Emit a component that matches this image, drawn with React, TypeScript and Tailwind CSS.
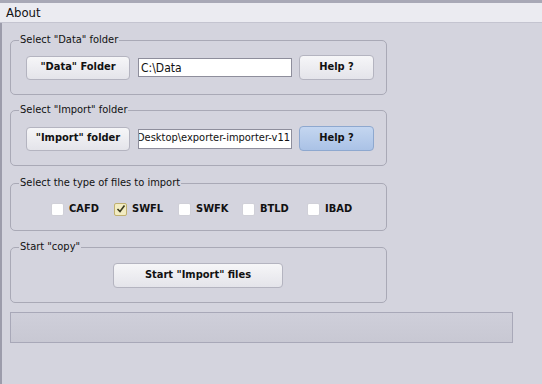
import React from "react";

const font = { fontFamily: '"DejaVu Sans", "Liberation Sans", sans-serif' };

function Btn({ children, w, blue }: { children: React.ReactNode; w: string; blue?: boolean }) {
  return (
    <div
      className={
        "flex h-[24px] items-center justify-center rounded-[4px] border text-[11px] font-bold font-stretch-condensed text-[#111] " +
        w +
        (blue
          ? " border-[#8ea8cf] bg-gradient-to-b from-[#c4d6f0] to-[#aac2e6]"
          : " border-[#b4b4c0] bg-gradient-to-b from-[#f6f6f8] to-[#e4e4ea]")
      }
    >
      {children}
    </div>
  );
}

function Group({ title, className, children }: { title: string; className: string; children: React.ReactNode }) {
  return (
    <div className={"relative w-[377px] rounded-[5px] border border-[#a9a9b6] " + className}>
      <span className="absolute left-[8px] top-[-9px] bg-[#d4d4de] px-[1px] text-[11px] leading-[16px] font-stretch-condensed text-[#111]">
        {title}
      </span>
      {children}
    </div>
  );
}

function Check({ label, checked }: { label: string; checked?: boolean }) {
  return (
    <div className="flex items-center gap-[5px]">
      <div
        className={
          "flex h-[13px] w-[13px] items-center justify-center rounded-[2px] border " +
          (checked ? "border-[#c0b070] bg-[#f2ecc2]" : "border-[#d0d0d8] bg-white")
        }
      >
        {checked && (
          <svg width="10" height="10" viewBox="0 0 10 10">
            <polyline points="1.5,5 4,7.5 8.5,1.5" fill="none" stroke="#3a3a20" strokeWidth="1.6" />
          </svg>
        )}
      </div>
      <span className="text-[11px] font-bold font-stretch-condensed text-[#111]">{label}</span>
    </div>
  );
}

export default function App() {
  return (
    <div style={font} className="flex h-[384px] w-[542px] flex-col overflow-hidden bg-[#d4d4de]">
      <div className="h-[3px] bg-[#a8a8b6]" />
      <div className="flex h-[20px] items-center border-b border-[#c4c4d0] bg-[#ebebf1] pl-[6px] text-[13px] font-stretch-condensed text-[#111]">
        About
      </div>
      <div className="flex flex-1 flex-col border-l-2 border-[#9c9cab] pl-[8px]">
        <Group title={'Select "Data" folder'} className="mt-[17px] h-[55px]">
          <div className="flex items-center pl-[15px] pt-[14px]">
            <Btn w="w-[104px]">"Data" Folder</Btn>
            <div className="ml-[8px] flex h-[19px] w-[154px] items-center overflow-hidden border border-[#8e8e9c] bg-white pl-[2px] text-[12px] font-stretch-condensed text-[#111]">
              C:\Data
            </div>
            <div className="ml-[7px]">
              <Btn w="w-[75px] h-[25px]">Help ?</Btn>
            </div>
          </div>
        </Group>
        <Group title={'Select "Import" folder'} className="mt-[15px] h-[56px]">
          <div className="flex items-center pl-[15px] pt-[15px]">
            <Btn w="w-[104px]">"Import" folder</Btn>
            <div className="ml-[8px] flex h-[20px] w-[154px] items-center justify-end overflow-hidden whitespace-nowrap border border-[#8e8e9c] bg-white pr-[1px] text-[11px] font-stretch-condensed text-[#111]">
              Desktop\exporter-importer-v11
            </div>
            <div className="ml-[7px]">
              <Btn w="w-[75px] h-[25px]" blue>
                Help ?
              </Btn>
            </div>
          </div>
        </Group>
        <Group title="Select the type of files to import" className="mt-[17px] h-[48px]">
          <div className="grid grid-cols-[63px_64px_64px_65px_auto] pl-[40px] pt-[17px]">
            <Check label="CAFD" />
            <Check label="SWFL" checked />
            <Check label="SWFK" />
            <Check label="BTLD" />
            <Check label="IBAD" />
          </div>
        </Group>
        <Group title={'Start "copy"'} className="mt-[16px] h-[56px]">
          <div className="flex pl-[102px] pt-[15px]">
            <Btn w="w-[170px] h-[25px]">Start "Import" files</Btn>
          </div>
        </Group>
        <div className="mt-[9px] h-[31px] w-[503px] border border-[#a8a8b8] bg-gradient-to-b from-[#cfcfda] to-[#c8c8d3]" />
      </div>
    </div>
  );
}
